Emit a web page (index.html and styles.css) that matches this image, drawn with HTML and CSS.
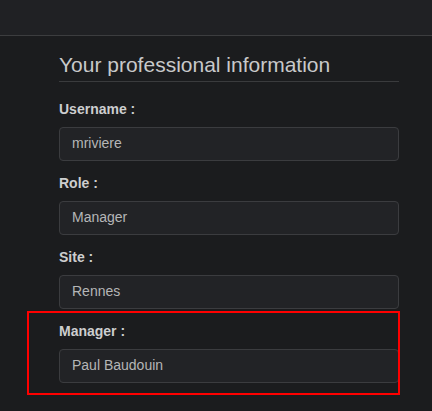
FILE: index.html
```html
<!DOCTYPE html>
<html lang="en">
<head>
<meta charset="utf-8">
<title>Your professional information</title>
<link rel="stylesheet" href="styles.css">
</head>
<body>
<header class="topbar"></header>
<main class="content">
  <h2 class="title">Your professional information</h2>
  <form class="form">
    <div class="group">
      <label class="label" for="username">Username :</label>
      <input class="field" id="username" type="text" value="mriviere" readonly>
    </div>
    <div class="group">
      <label class="label" for="role">Role :</label>
      <input class="field" id="role" type="text" value="Manager" readonly>
    </div>
    <div class="group">
      <label class="label" for="site">Site :</label>
      <input class="field" id="site" type="text" value="Rennes" readonly>
    </div>
    <div class="group highlight">
      <label class="label" for="manager">Manager :</label>
      <input class="field" id="manager" type="text" value="Paul Baudouin" readonly>
    </div>
  </form>
</main>
</body>
</html>
```

FILE: styles.css
```css
* { box-sizing: border-box; }
html, body {
  margin: 0;
  padding: 0;
  background: #1b1c1e;
  font-family: "Liberation Sans", Arial, sans-serif;
}
.topbar {
  height: 36px;
  background: #202124;
  border-bottom: 1px solid #3c3d3f;
}
.content {
  width: 340px;
  margin-left: 59px;
  padding-top: 16px;
  padding-bottom: 28px;
}
.title {
  margin: 0;
  font-size: 21px;
  font-weight: normal;
  line-height: 25px;
  padding-bottom: 4px;
  color: #c8c9ca;
  border-bottom: 1px solid #3a3b3d;
}
.form {
  margin-top: 17px;
  display: flex;
  flex-direction: column;
  gap: 12px;
}
.group {
  display: flex;
  flex-direction: column;
}
.label {
  font-size: 14px;
  font-weight: bold;
  line-height: 21px;
  margin-bottom: 7px;
  color: #cdcecf;
}
.field {
  display: block;
  width: 100%;
  height: 34px;
  margin: 0;
  padding: 0 12px 2px;
  font-family: "Liberation Sans", Arial, sans-serif;
  font-size: 14px;
  color: #b5b6b7;
  background: #222326;
  border: 1px solid #3b3c3f;
  border-radius: 4px;
  outline: none;
}
.highlight {
  position: relative;
}
.highlight::after {
  content: "";
  position: absolute;
  top: -10px;
  left: -32px;
  right: -1px;
  bottom: -12px;
  border: 2px solid #ff0000;
  pointer-events: none;
}
```
